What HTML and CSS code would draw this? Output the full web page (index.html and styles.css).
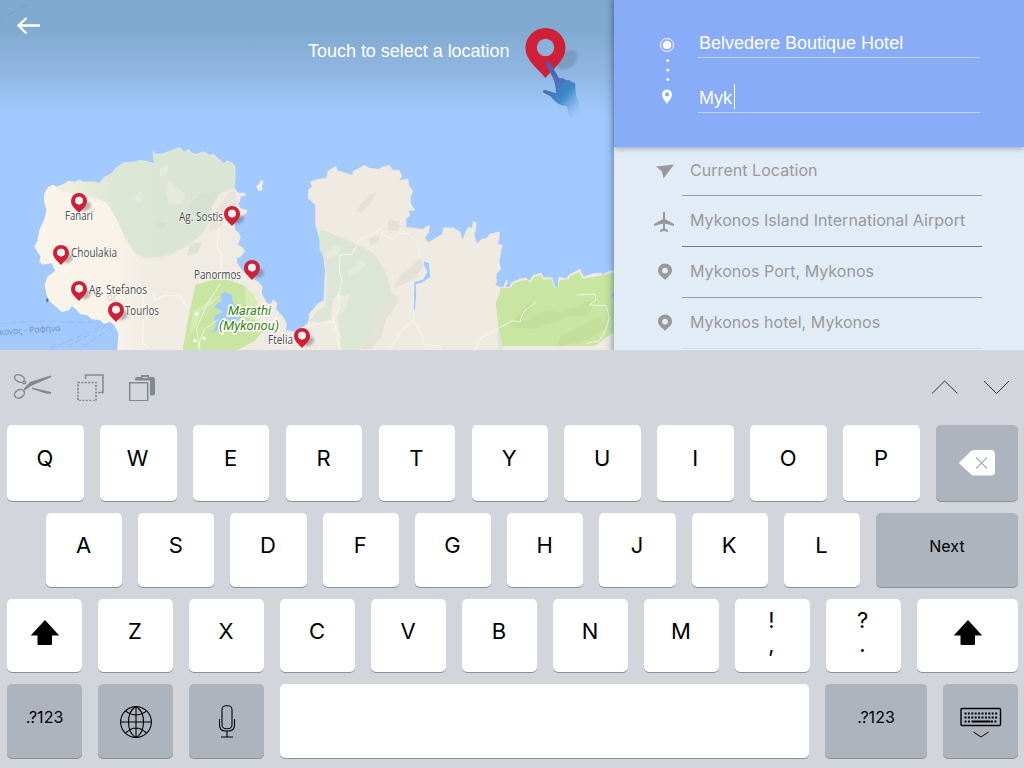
FILE: index.html
```html
<!DOCTYPE html>
<html lang="en">
<head>
<meta charset="utf-8">
<title>Select a location</title>
<link rel="stylesheet" href="styles.css">
</head>
<body>
<div class="screen">
<main class="top">
<section class="map">
<svg class="map-art" viewBox="0 0 614 350" width="614" height="350">
<defs>
<linearGradient id="shade" x1="0" y1="0" x2="0" y2="1"><stop offset="0" stop-color="#80a9cf"/><stop offset=".25" stop-color="#81aad1"/><stop offset=".62" stop-color="#90b7e3"/><stop offset="1" stop-color="#a2caff"/></linearGradient>
<linearGradient id="land" x1="0" x2="1"><stop offset="0" stop-color="#fbf4eb"/><stop offset=".28" stop-color="#faf3ea"/><stop offset=".42" stop-color="#f0ece3"/><stop offset="1" stop-color="#efebe2"/></linearGradient>
<linearGradient id="forest" x1="0" x2="1"><stop offset="0" stop-color="#dfe7d4" stop-opacity=".35"/><stop offset=".35" stop-color="#dce6d5"/><stop offset="1" stop-color="#dbe5d5"/></linearGradient>
<linearGradient id="hand" x1="0" y1="0" x2=".75" y2="1"><stop offset="0" stop-color="#5b4f9d"/><stop offset=".35" stop-color="#4b6db9"/><stop offset=".65" stop-color="#3d8bcb"/><stop offset="1" stop-color="#7bb6ee" stop-opacity=".05"/></linearGradient>
<linearGradient id="edge" x1="0" x2="1"><stop offset="0" stop-color="#31506e" stop-opacity="0"/><stop offset=".5" stop-color="#31506e" stop-opacity=".08"/><stop offset="1" stop-color="#31506e" stop-opacity=".35"/></linearGradient>
<filter id="soft"><feGaussianBlur stdDeviation="1"/></filter>
<symbol id="pin" viewBox="0 0 30 26" overflow="visible">
<ellipse cx="15" cy="13.500" rx="5.500" ry="4" transform="rotate(-35 15 13.500)" fill="#555" opacity=".4" filter="url(#soft)"/>
<path fill-rule="evenodd" fill="#d02038" d="M8 0a8 8 0 0 1 8 8c0 5-4.500 8-8 12C4.500 16 0 13 0 8a8 8 0 0 1 8-8zm0 3.800a3.800 3.800 0 1 0 0 7.600 3.800 3.800 0 0 0 0-7.600z"/>
<circle cx="8" cy="7.600" r="3.800" fill="#f2f2f2"/>
</symbol>
</defs>
<rect width="614" height="350" fill="#a2caff"/>
<rect width="614" height="118" fill="url(#shade)"/>
<path d="M0 21l3-2m5-4l9-5m4-2l6-4" stroke="#7297c5" stroke-width=".7" fill="none"/>
<g transform="translate(0 130) scale(.33333)">
<path fill="url(#land)" d="M133 190L145 170 158 164 172 170 195 160 205 152 225 156 238 149 250 155 285 155 298 160 312 142 335 130 350 112 372 97 400 95 420 90 440 94 462 100 458 62 466 72 490 70 510 62 540 52 552 66 566 58 575 68 590 72 610 64 630 76 640 72 655 86 672 100 682 92 697 98 706 110 706 150 703 172 712 185 722 190 730 187 740 196 722 200 720 215 714 220 722 235 742 240 740 250 722 262 702 275 706 300 716 308 722 320 714 345 728 352 735 365 722 380 710 385 712 400 730 425 755 445 775 455 788 470 785 490 800 518 812 522 820 508 832 520 828 538 848 558 860 580 858 600 885 606 905 595 922 580 930 560V660H352L355 610 342 585 330 575 312 582 300 570 275 568 262 556 240 552 228 538 215 528 208 540 186 546 165 528 150 515 140 495 134 465 142 440 166 422 155 400 128 404 118 395 122 380 103 350 112 332 118 300 132 270 140 240 132 215z"/>
<path fill="url(#forest)" d="M163 172L195 161 205 152 225 156 238 149 250 155 285 155 298 160 312 142 335 130 350 112 372 97 400 95 420 90 440 94 462 100 458 66 466 74 490 72 510 64 540 54 552 68 566 60 575 70 590 74 610 66 630 78 640 74 655 88 672 102 682 94 697 100 704 112 704 150 702 176 661 190 637 230 627 275 605 315 560 348 520 370 480 382 435 384 405 368 375 322 345 258 318 215 265 200 180 184z"/>
<g fill="#e7ecde" opacity=".8"><path d="M500 159l18-5 4 18 20 7 15 14-10 28-40 3-8-34z"/><path d="M480 115l14-11 11 5-5 26-20 2zM402 203l17-21 12 15-12 22z"/></g>
<path fill="#d2ded0" opacity=".6" d="M600 188h55l-22 37-19 40-24 7-8-30-22 8 13-38 22-8zM470 275l29 5-8 18-25-5zM570 343l36-8-14 35-31 8z"/>
<path fill="#e2ded5" opacity=".55" d="M647 240l42-52 17-10 5 40-28 38-24 40-35 4z"/>
<g stroke="#f9f7f2" stroke-width="3" fill="none"><path d="M690 250l-12 30-20 15-7 55 16 33-8 47 9 22M345 575l28-25 55-12 4-60 23 5 12 28 22-14 50 1 18 30 17 5M430 560l-3 80 18 12M720 450l-10 38"/></g>
<path fill="#c9e5a2" d="M586 465l60-17 43 3 42 15 28 27 15 27-11 48 31 18 11-4-40 50-53 28H548l14-80z"/>
<path fill="#d5edb5" d="M735 470l28 25 10 28-14 49-20-10zM660 495l-24 28-32 21-16 46-20 26 12-75z"/>
<path fill="#a2caff" d="M661 494l14-9 23 11-2 13 11 25 14 28-14 18-20-6-9 18-23 8-17 8 12-27-9-17 7-10 22-8-14-8-15-6 14-13 10-6z"/>
<path d="M660 463l-40 62-30 70 10 65M655 568l-42 30-20 55" fill="none" stroke="#edf3da" stroke-width="3"/>
<g fill="#fff"><circle cx="590" cy="552" r="5"/><circle cx="613" cy="625" r="5"/><circle cx="585" cy="632" r="5"/></g>
<path fill="#f2eee6" d="M768 170l9-8 4-9 10-2-5 18 1 10-10 5z"/>
<path d="M138 508l5-4 3 9-6 5z" fill="#5f7d72"/>
<path stroke="#8fb7ed" stroke-width="2" stroke-dasharray="22 7" fill="none" d="M0 582l90-8 210 4M150 658l170-76M200 650l125-65M245 652l90-60M0 614l70 3"/>
<text x="320" y="513" class="ghost">oc</text>
<text x="-2" y="615" class="ferry" textLength="184" transform="rotate(-4 0 612)">κονος - Ραφήνα</text>
</g>
<g transform="translate(300 150) scale(.33333)">
<path fill="#efebe2" stroke="#f8ead8" stroke-width="2" d="M32 95L50 90 80 84 84 64 107 49 112 62 158 76 160 64 175 56 193 46 207 55 235 58 250 50 270 47 276 60 298 62 305 78 296 92 324 88 326 106 338 122 330 145 332 162 344 180 325 182 330 196 318 206 318 232 352 236 368 238 388 226 386 248 374 262 385 278 428 252 430 234 460 234 480 246 488 272 500 240 505 232 517 235 520 214 528 218 526 245 522 255 530 282 545 268 560 265 570 252 598 246 597 270 591 282 608 286 603 300 597 335 602 358 588 372 590 395 585 405 600 412 610 412 620 390 622 400 615 412 628 412 635 398 660 387 678 384 688 394 700 376 724 370 730 384 755 383 766 412 775 410 776 382 800 386 806 376 840 358 850 380 885 370 900 370 910 374 930 362 945 362V605H0V535L26 528 28 492 55 460 72 452 76 360 68 300 55 250 47 225 47 165 25 145 26 118 37 112z"/>
<path fill="#dde6d6" d="M58 244l13-4 90 38 58 30 35 52 24 78-1 26-30 48-35 50-36 38H125l-16-70-10-22-40 10-30-4 26-34 20-8 6-90-8-54-14-28z"/>
<path fill="#efebe2" d="M100 445l18-13 17 6-2 18-20 38 12 106h-10l-10-78-14-18z"/>
<path fill="#e5eadf" d="M75 310l28-22 18 5-5 20-38 12zM145 365l38-33 20 8-12 14-45 28zM140 430l10 4-12 43-24 24 4-36z"/>
<g fill="#e5e1d9"><path d="M168 187l22-35 18-18 20-4-16 28-22 24zM283 408l22-38 38-28 20-20 5 28-18 33-65 32zM205 270l20-13 15 5-5 14-22 8zM262 222l8-16 14 8 14-2 2 18-10 14-25-3zM275 430l23 17-18 32-24 30-10 50-30 38h-33l45-55 28-62z"/></g>
<path fill="#a2caff" stroke="#f9f5ee" stroke-width="2" d="M370 332l18 6 4 43-25 18-18 4 1 32-4 48h-6l2-88 27-8 12-22-11-20z"/>
<path fill="#c8e5a1" d="M600 414l30 0 10-12 22-10 20-2 8 8 14-18 18-4 8 14 22-4 14 27 10-2 3-20 27-3 6-10 26-12 8 20 38-6 50-10 11-2v175l-60 45H605l-10-60-8-70 12-25z"/>
<g fill="#bfdb98" opacity=".55"><path d="M705 440l-15 38-30 40-30 8 35-45zM700 500l44-20 38 8 70-30 38-8-30 48-60-1-90 40-80-6zM780 560l50-24 70-36 24 28-60 42-90 20z"/></g>
<g stroke="#f9f7ef" stroke-width="2.500" fill="none"><path d="M240 235l-20 18-40 15-25 45-35 2-2 50 8 30-12 50 5 30-20 30 8 30 12 60M240 235l8 20 30 12 15-16 30-2 36 35v40M340 482v30l-20 14-30 40-25 35M340 512l28 45 4 28 46 1 5 14M524 600l20-38 56-30 38-20 22 4 10-30 38-30M830 435l55-3 3 18-20 15 50 2 10 35-12 40-18 30-38 8M25 530l30-10 45-5 22 50"/></g>
<path fill="#a2caff" d="M932 440l12-20v20z"/>
<path fill="#efebe2" d="M855 600l90-44v44z"/>
<path fill="#dde6d6" d="M588 462l-1 10 8 50-4 40 6 38h12l-12-60-10-68z"/>
<path d="M373 265l10 13" stroke="#f6e78a" stroke-width="4"/>
</g>
<use href="#pin" x="71" y="193" width="30" height="26"/><use href="#pin" x="53" y="245" width="30" height="26"/><use href="#pin" x="71" y="281" width="30" height="26"/><use href="#pin" x="108" y="302" width="30" height="26"/><use href="#pin" x="224" y="206" width="30" height="26"/><use href="#pin" x="244" y="260" width="30" height="26"/><use href="#pin" x="294" y="328" width="30" height="26"/>
<g class="place"><text x="65" y="220" textLength="28" lengthAdjust="spacingAndGlyphs">Fanari</text><text x="71" y="256.500" textLength="46" lengthAdjust="spacingAndGlyphs">Choulakia</text><text x="89" y="294" textLength="58" lengthAdjust="spacingAndGlyphs">Ag. Stefanos</text><text x="125" y="315" textLength="34" lengthAdjust="spacingAndGlyphs">Tourlos</text><text x="179" y="221" textLength="44" lengthAdjust="spacingAndGlyphs">Ag. Sostis</text><text x="194" y="279" textLength="47" lengthAdjust="spacingAndGlyphs">Panormos</text><text x="268" y="343.500" textLength="25" lengthAdjust="spacingAndGlyphs">Ftelia</text></g>
<g class="park"><text x="228" y="315" textLength="43" lengthAdjust="spacingAndGlyphs">Marathi</text><text x="219" y="330" textLength="60" lengthAdjust="spacingAndGlyphs">(Mykonou)</text></g>
<path d="M18.500 25.500h21.500M26.500 18l-8 7.500 8 8" fill="none" stroke="#fff" stroke-width="2.300"/>
<text x="308" y="57" textLength="201.500" class="hint">Touch to select a location</text>
<ellipse cx="567" cy="60" rx="12" ry="8" transform="rotate(-40 567 60)" fill="#5c7f9e" opacity=".4" filter="url(#soft)"/>
<path fill="#d02038" d="M545.500 28a20 20 0 0 1 20 20c0 12-10 18-20 30-10-12-20-18-20-30a20 20 0 0 1 20-20z"/>
<circle cx="545.500" cy="47.500" r="8.700" fill="#89b1dc"/>
<path fill="url(#hand)" d="M545.500 63c0-2.500 3.500-2.500 5 .5l8.500 14.500 4 .2 3 2 4 0 2 2 3 .5 1 13 1.500 4 5 15-12 5-4-14c-7 1-13-6-16-9.500l-7.500-4c0-2 1-2.500 3-2l10 3c0-7-2-14-4-17z"/>
<rect x="604" width="10" height="350" fill="url(#edge)"/>
</svg>
</section>
<aside class="panel">
<form class="route">
<div class="route-row"><svg width="20" height="60" viewBox="0 0 20 60" class="start"><circle cx="10" cy="8" r="6.500" fill="none" stroke="#fff"/><circle cx="10" cy="8" r="4.300" fill="#fff"/><g fill="#fff"><circle cx="10.700" cy="23.500" r="1.500"/><circle cx="10.900" cy="33" r="1.500"/><circle cx="10.900" cy="42.500" r="1.500"/></g></svg><div class="field">Belvedere Boutique Hotel</div></div>
<div class="route-row second"><svg width="20" height="20" viewBox="0 0 20 20" class="end"><path fill="#fff" fill-rule="evenodd" d="M10 2.500a5 5 0 0 1 5 5c0 3.500-3 6-5 9.500-2-3.500-5-6-5-9.500a5 5 0 0 1 5-5zm0 2.800a2.100 2.100 0 1 0 0 4.200 2.100 2.100 0 0 0 0-4.200z"/></svg><div class="field">Myk<span class="caret"></span></div></div>
</form>
<ul class="results">
<li><svg viewBox="0 0 22 22"><path d="M2 6.500l18-2L9.500 18.500 8 11.500z" fill="#999"/></svg><span>Current Location</span></li>
<li><svg viewBox="0 0 22 22"><path d="M10 2.500q1-2 2 0V9l9 5v2l-9-2.500v5l3 1.700V22l-4-1-4 1v-1.800l3-1.700v-5L1 16v-2l9-5z" fill="#999"/></svg><span>Mykonos Island International Airport</span></li>
<li><svg viewBox="0 0 22 22"><path fill="#999" fill-rule="evenodd" d="M12 2.500a7 7 0 0 1 7 7c0 4-3.500 5.500-7 9.500-3.500-4-7-5.500-7-9.500a7 7 0 0 1 7-7zm0 4.200a2.900 2.900 0 1 0 0 5.800 2.900 2.900 0 0 0 0-5.800z"/></svg><span>Mykonos Port, Mykonos</span></li>
<li><svg viewBox="0 0 22 22"><path fill="#999" fill-rule="evenodd" d="M12 2.500a7 7 0 0 1 7 7c0 4-3.500 5.500-7 9.500-3.500-4-7-5.500-7-9.500a7 7 0 0 1 7-7zm0 4.200a2.900 2.900 0 1 0 0 5.800 2.900 2.900 0 0 0 0-5.800z"/></svg><span>Mykonos hotel, Mykonos</span></li>
</ul>
</aside>
</main>
<section class="keyboard">
<div class="toolbar">
<svg width="146" height="30" viewBox="0 0 146 30" fill="none" stroke="#84898b" stroke-width="1.500">
<ellipse cx="9.500" cy="7.500" rx="5.200" ry="3.500" transform="rotate(25 9.500 7.500)"/><ellipse cx="9.500" cy="22.800" rx="5.200" ry="3.900" transform="rotate(-28 9.500 22.800)"/><path d="M12.500 12q3 1 3 0V10M14 19l4-3"/><path d="M14 17.500l6-6.500 20.500-6.500 1 1.500L22 14.500l-7 4.500zM22 16.500l19 4.500v2l-5-.5-14-4.500z" fill="#84898b" stroke="none"/>
<path d="M68 11.500h18v18H68z" stroke-dasharray="2 1.400" stroke-width="1.700"/><path d="M75.500 8V4H93v17.500h-5"/>
<path d="M119.700 11.700h18v18h-18z"/><path d="M125 9.500V8q0-2 2-2h4V4h8v2h3.500q2.500 0 2.500 2.500v14q0 2-2 2h-3v-15z" fill="#84898b" stroke="none"/><path d="M132.500 6.500h5" stroke="#d2d5dc" stroke-width="1"/>
</svg>
<svg width="80" height="20" viewBox="0 0 80 20" fill="none" stroke="#333" stroke-width="1"><path d="M2 15.500L14.700 3l12.800 12.500M54 3l12.500 12.500L79 3"/></svg>
</div>
<div class="row row-one"><div class="key">Q</div><div class="key">W</div><div class="key">E</div><div class="key">R</div><div class="key">T</div><div class="key">Y</div><div class="key">U</div><div class="key">I</div><div class="key">O</div><div class="key">P</div><div class="key dark back"><svg width="38" height="28" viewBox="0 0 38 28"><path d="M.8 14L12.500 2.500Q14 1 16 1h17q4 0 4 4v17.500q0 4-4 4H16q-2 0-3.500-1.500z" fill="#fff"/><path d="M18 8.500l11 11M29 8.500l-11 11" stroke="#a9b0ba" stroke-width="1.200"/></svg></div></div>
<div class="row row-two"><div class="key">A</div><div class="key">S</div><div class="key">D</div><div class="key">F</div><div class="key">G</div><div class="key">H</div><div class="key">J</div><div class="key">K</div><div class="key">L</div><div class="key dark next">Next</div></div>
<div class="row row-three"><div class="key icon"><svg width="30" height="28" viewBox="0 0 30 28"><path d="M15 1l14.200 15.500H22V25q0 1-1 1H8.500q-1 0-1-1v-8.500H.7z"/></svg></div><div class="key">Z</div><div class="key">X</div><div class="key">C</div><div class="key">V</div><div class="key">B</div><div class="key">N</div><div class="key">M</div><div class="key double"><span>!</span><span>,</span></div><div class="key double"><span>?</span><span>.</span></div><div class="key icon shift-right"><svg width="30" height="28" viewBox="0 0 30 28"><path d="M15 1l14.200 15.500H22V25q0 1-1 1H8.500q-1 0-1-1v-8.500H.7z"/></svg></div></div>
<div class="row row-four"><div class="key dark small">.?123</div><div class="key dark icon low"><svg width="34" height="34" viewBox="0 0 34 34" fill="none" stroke="#000" stroke-width="1.100"><circle cx="17" cy="17" r="15.400"/><path d="M17 1.500v31M1.500 17h31M6.500 6q10.500 8 21 0M6.500 28q10.500-10 21 0M17 1.500C7 7 7 27 17 32.500M17 1.500c10 5.500 10 25.500 0 31"/></svg></div><div class="key dark icon low"><svg width="20" height="34" viewBox="0 0 20 34" fill="none" stroke="#000" stroke-width="1.100"><rect x="5" y=".8" width="10" height="23" rx="4"/><path d="M2.500 14v6q0 6 6 6h3q6 0 6-6v-6M10 26v6M4 32h12"/></svg></div><div class="key space"></div><div class="key dark small wide">.?123</div><div class="key dark icon low"><svg width="42" height="32" viewBox="0 0 42 32" fill="none" stroke="#000"><rect x="1" y="2.500" width="39.500" height="17" rx="1" stroke-width="1.400"/><path d="M4.500 7.500h33M4.500 11.500h33M4.500 15.500h6M31 15.500h6" stroke-width="2" stroke-dasharray="2 1.400"/><path d="M11.500 15.500h19" stroke-width="2"/><path d="M13.500 26l7.500 5 7.500-5"/></svg></div></div>
</section>
</div>
</body>
</html>
```
FILE: styles.css
```css
* { box-sizing: border-box; }
body { margin: 0; font-family: Inter, sans-serif; }
.screen { width: 1024px; height: 768px; overflow: hidden; }
.top { display: flex; height: 350px; overflow: hidden; }
.map { width: 614px; }
.map-art { display: block; }
.place { font: 12px "Open Sans", sans-serif; fill: #4d4d50; }
.place text { stroke: #fff; stroke-opacity: .5; stroke-width: 2px; paint-order: stroke; }
.park { font: italic 400 13px Roboto, sans-serif; fill: #37850f; stroke: #fff; stroke-width: 3px; paint-order: stroke; }
.ferry { font: 26px "Noto Sans", sans-serif; fill: #7593cf; }
.ghost { font: 30px "Open Sans", sans-serif; fill: #d8d0c4; }
.hint { font: 18px "Liberation Sans", sans-serif; fill: #fff; }
.panel { width: 410px; background: #e2ecf7; }
.route { height: 147px; padding: 29px 44px 0 43px; background: #88acf8; box-shadow: 0 2px 5px rgba(70, 85, 105, .4); position: relative; }
.route-row { display: flex; height: 55px; align-items: flex-start; }
.route-row svg { flex: none; margin-right: 21px; }
.start { margin-top: 8px; }
.end { margin-top: 3px; }
.field { flex: 1; height: 29px; border-bottom: 1px solid #bfd3fc; font: 18px/28px "Liberation Sans", sans-serif; color: #fff; padding-left: 1px; display: flex; }
.caret { width: 1px; height: 25px; background: #fff; margin-left: 2px; }
.results { list-style: none; margin: 0; padding: 0 42px 0 40px; }
.results li { height: 51px; display: grid; grid-template-columns: 28px 1fr; align-items: center; color: #999; font-size: 16px; grid-template-rows: 50px 1px; }
.results li:first-child { height: 49px; grid-template-rows: 48px 1px; }
.results li::after { content: ""; grid-column: 2; height: 1px; background: #949ba2; align-self: end; }
.results li:nth-child(2)::after { background: #777b80; }
.results li:last-child::after { background: #d1d9e3; }
.results svg { width: 22px; height: 22px; }
.results li:nth-child(n+2) svg { margin-left: -1px; }
.results span { padding-left: 8px; margin-top: -3px; white-space: nowrap; letter-spacing: .05px; }
.keyboard { height: 418px; background: #d2d5dc; padding: 0 6px 0 7px; }
.toolbar { height: 75px; display: flex; justify-content: space-between; align-items: flex-start; padding: 21px 8px 0 3px; }
.toolbar svg + svg { margin-top: 7px; }
.row { display: flex; gap: 16px; height: 73px; margin-bottom: 12px; }
.row-one { height: 76px; gap: 16.300px; }
.row-two { padding-left: 39px; height: 73.500px; }
.row-three .key { flex: 0 0 75px; }
.row-three .shift-right { flex: 0 0 101px; }
.row-four { height: 74px; margin-bottom: 0; }
.key { flex: 1 1 0; min-width: 0; border-radius: 5px; background: #fff; box-shadow: 0 1px 0 #8c9097; display: flex; align-items: center; justify-content: center; padding: 0 1px 10px 0; font-size: 22px; color: #000; }
.row-three .key { padding-bottom: 8px; }
.dark { background: #adb4be; }
.row-one .back { flex: 0 0 82px; padding: 0; }
.next { flex: 0 0 142px; font-size: 16px; padding: 0 0 8px; }
.row-three .icon { padding: 0 0 4px; }
.low { padding: 2px 0 0; }
.row-three .double { flex-direction: column; padding: 0 2px 6px 0; line-height: 24px; }
.small { flex: 0 0 75px; font-size: 16px; padding: 0 0 8px; }
.wide { flex-basis: 102px; }
.space { flex: 0 0 529px; }
```
